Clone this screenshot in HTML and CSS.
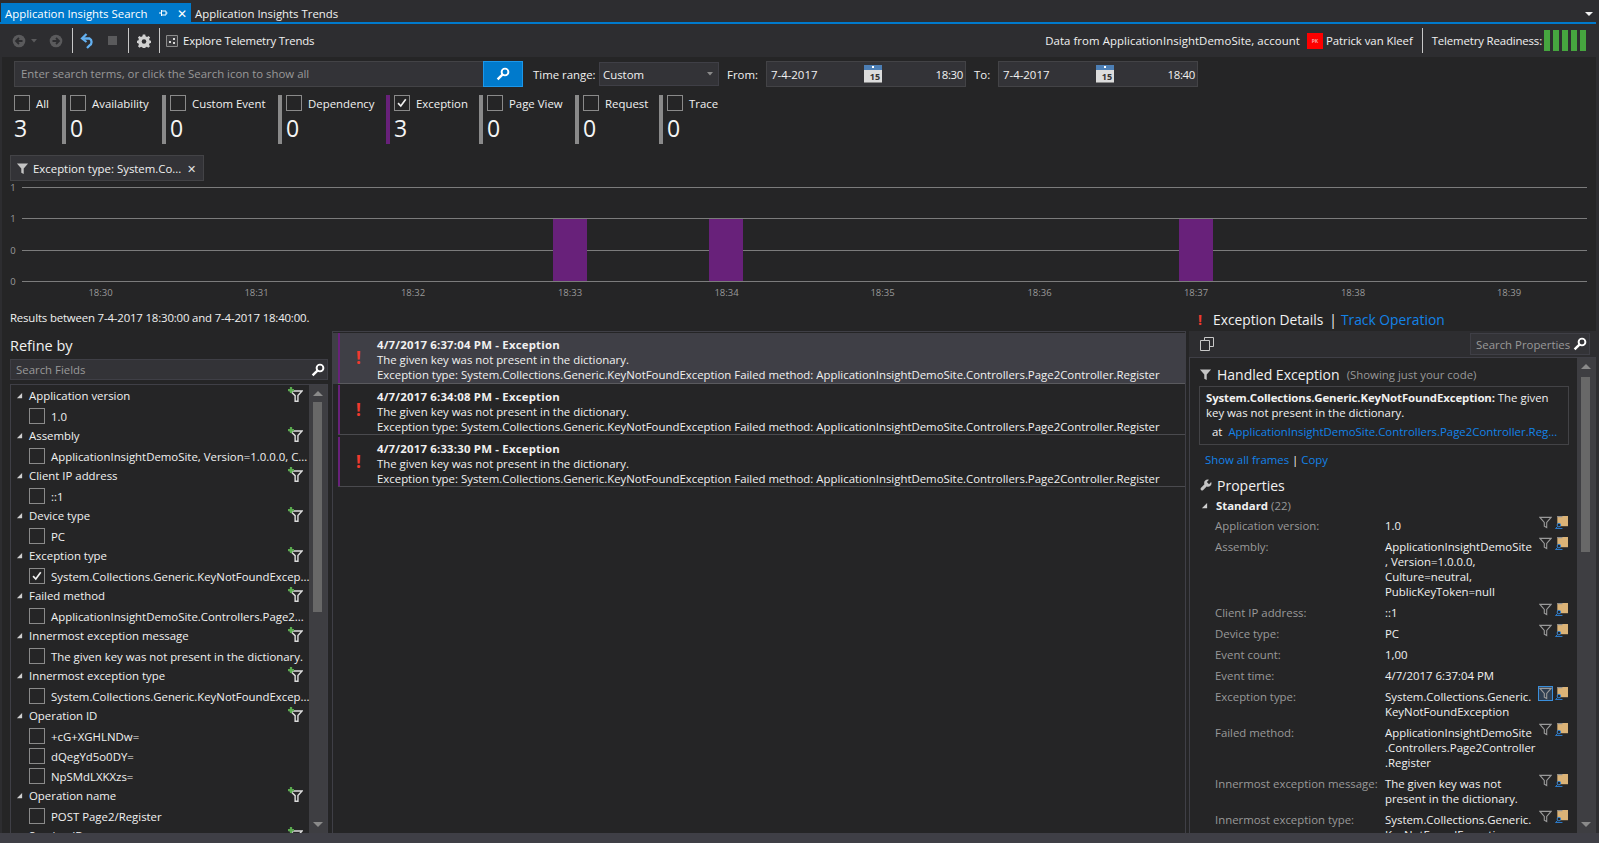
FILE: index.html
```html
<!DOCTYPE html>
<html lang="en">
<head>
<meta charset="utf-8">
<title>Application Insights Search</title>
<link rel="stylesheet" href="styles.css">
</head>
<body>
<svg class="sprite" width="0" height="0" aria-hidden="true">
  <symbol id="i-funnel-plus" viewBox="0 0 16 16">
    <path d="M2.5 4.2H15L10.6 9.2V15.2H7.6V9.2Z" fill="#252526" stroke="#dcdcdc" stroke-width="1.5"/>
    <path d="M3.2 0V6.4M0 3.2H6.4" stroke="#5cab50" stroke-width="2.4"/>
  </symbol>
  <symbol id="i-funnel" viewBox="0 0 14 14">
    <path d="M1 1.5H13L8.3 7V12.5L5.7 11V7Z" fill="none" stroke="#9a9a9a" stroke-width="1.2"/>
  </symbol>
  <symbol id="i-funnel-solid" viewBox="0 0 14 14">
    <path d="M1 1.5H13L8.3 7V13L5.7 11.5V7Z" fill="#c4c4c4"/>
  </symbol>
  <symbol id="i-doc" viewBox="0 0 14 14">
    <path d="M2.5 0H14V11H2.5Z" fill="#dbb377"/>
    <path d="M2.5 0H8V1.3H2.5Z" fill="#8f8f8f"/>
    <circle cx="4.2" cy="9.8" r="1.9" fill="#252526" stroke="#2f86dc" stroke-width="1"/>
    <path d="M2.8 11.4L.6 13.4H8" stroke="#2f86dc" stroke-width="1" fill="none"/>
  </symbol>
  <symbol id="i-search" viewBox="0 0 14 14">
    <circle cx="9" cy="5" r="3.4" fill="none" stroke="#fff" stroke-width="1.9"/>
    <path d="M6.4 7.6L1.6 12.4" stroke="#fff" stroke-width="2.4"/>
  </symbol>
  <symbol id="i-tri" viewBox="0 0 8 8">
    <path d="M7 1V7H1Z" fill="#d0d0d0"/>
  </symbol>
  <symbol id="i-check" viewBox="0 0 16 16">
    <path d="M3.5 8.2L6.6 11.4L12.3 3.8" fill="none" stroke="#f1f1f1" stroke-width="1.9"/>
  </symbol>
  <symbol id="i-cal" viewBox="0 0 20 18">
    <path d="M1 0H19V18H1Z" fill="#dcdcdc"/>
    <path d="M1 0H19V5H1Z" fill="#4d7fb5"/>
    <path d="M9 1H11V3H9Z" fill="#fff"/>
    <path d="M1 17H19V18H1Z" fill="#8a8a8a"/>
  </symbol>
</svg>

<div class="tabs">
  <div class="tab active">
    <span class="tab-name">Application Insights Search</span>
    <svg class="tab-pin" viewBox="0 0 10 10" width="10" height="10"><path d="M1 5H3.5M3.5 2V8M3.5 3H8V7H3.5M8 5H9.5" fill="none" stroke="#fff"/></svg>
    <span class="tab-close">✕</span>
  </div>
  <div class="tab"><span class="tab-name">Application Insights Trends</span></div>
  <div class="tab-menu"></div>
</div>

<div class="toolbar">
  <svg class="tool" viewBox="0 0 14 14" width="14" height="14"><circle cx="7" cy="7" r="6.3" fill="#5a5a5c"/><path d="M10.5 7H4.5M7 4L4 7L7 10" fill="none" stroke="#2d2d30" stroke-width="1.8"/></svg>
  <svg class="tool-drop" viewBox="0 0 6 4" width="6" height="4"><path d="M0 0H6L3 3.5Z" fill="#5a5a5c"/></svg>
  <svg class="tool tool-fwd" viewBox="0 0 14 14" width="14" height="14"><circle cx="7" cy="7" r="6.3" fill="#5a5a5c"/><path d="M3.5 7H9.5M7 4L10 7L7 10" fill="none" stroke="#2d2d30" stroke-width="1.8"/></svg>
  <span class="tool-sep sep-a"></span>
  <svg class="tool tool-undo" viewBox="0 0 16 16" width="16" height="16"><path d="M2.5 5.5H9.5A4 4 0 0 1 9.5 12.5L7 15" fill="none" stroke="#63b0f1" stroke-width="2.3"/><path d="M6.5 1L2 5.5L6.5 9" fill="none" stroke="#63b0f1" stroke-width="2.2"/></svg>
  <span class="tool-stop"></span>
  <span class="tool-sep sep-b"></span>
  <svg class="tool-gear" viewBox="0 0 16 16" width="14" height="14"><path d="M6.6 0.6H9.4L9.8 2.6L11.5 3.3L13.2 2.2L15 4L13.8 5.8L14.5 7.4L16 7.8V10.2L14.4 10.6L13.7 12.3L14.8 13.9L12.9 15.7L11.3 14.6L9.6 15.3L9.3 16H6.7L6.3 15.3L4.6 14.6L3 15.7L1.1 13.9L2.2 12.3L1.5 10.6L0 10.2V7.8L1.5 7.4L2.2 5.8L1 4L2.8 2.2L4.5 3.3L6.2 2.6Z" fill="#d0d0d0"/><circle cx="8" cy="8.6" r="2.6" fill="#2d2d30"/></svg>
  <span class="tool-sep sep-c"></span>
  <svg class="tool-explore" viewBox="0 0 12 12" width="12" height="12"><path d="M.5 .5H11.5V11.5H.5Z" fill="#3a3a3d" stroke="#8c8c8c"/><path d="M3 6H5V8H3ZM7 3H9V5H7ZM7 7H9V9H7Z" fill="#d8d8d8"/></svg>
  <span class="tool-label">Explore Telemetry Trends</span>
  <span class="spacer"></span>
  <span class="data-from">Data from ApplicationInsightDemoSite, account</span>
  <span class="avatar">PK</span>
  <span class="data-name">Patrick van Kleef</span>
  <span class="tool-sep sep-d"></span>
  <span class="ready-label">Telemetry Readiness:</span>
  <span class="ready-bars"><i></i><i></i><i></i><i></i><i></i></span>
</div>

<main class="main">
  <div class="query">
    <div class="searchbox">
      <span class="search-hint">Enter search terms, or click the Search icon to show all</span>
      <button class="search-btn" type="button"><svg viewBox="0 0 14 14" width="14" height="14"><use href="#i-search"/></svg></button>
    </div>
    <span class="q-label q-range">Time range:</span>
    <div class="combo"><span>Custom</span><svg viewBox="0 0 6 4" width="6" height="4"><path d="M0 0H6L3 3.5Z" fill="#8a8a8a"/></svg></div>
    <span class="q-label q-from">From:</span>
    <div class="datebox"><span class="date-val">7-4-2017</span><svg class="cal" viewBox="0 0 20 18" width="20" height="18"><use href="#i-cal"/></svg><span class="cal-day">15</span><span class="date-time">18:30</span></div>
    <span class="q-label q-to">To:</span>
    <div class="datebox"><span class="date-val">7-4-2017</span><svg class="cal" viewBox="0 0 20 18" width="20" height="18"><use href="#i-cal"/></svg><span class="cal-day">15</span><span class="date-time">18:40</span></div>
  </div>

  <div class="cats">
    <div class="cat cat-all"><div class="cat-head"><span class="box"></span><span>All</span></div><div class="cat-num">3</div></div>
    <div class="cat cat-avail"><div class="cat-head"><span class="box"></span><span>Availability</span></div><div class="cat-num">0</div></div>
    <div class="cat cat-custom"><div class="cat-head"><span class="box"></span><span>Custom Event</span></div><div class="cat-num">0</div></div>
    <div class="cat cat-dep"><div class="cat-head"><span class="box"></span><span>Dependency</span></div><div class="cat-num">0</div></div>
    <div class="cat cat-exc"><div class="cat-head"><span class="box"><svg viewBox="0 0 16 16" width="14" height="14"><use href="#i-check"/></svg></span><span>Exception</span></div><div class="cat-num">3</div></div>
    <div class="cat cat-page"><div class="cat-head"><span class="box"></span><span>Page View</span></div><div class="cat-num">0</div></div>
    <div class="cat cat-req"><div class="cat-head"><span class="box"></span><span>Request</span></div><div class="cat-num">0</div></div>
    <div class="cat cat-trace"><div class="cat-head"><span class="box"></span><span>Trace</span></div><div class="cat-num">0</div></div>
  </div>

  <div class="chip">
    <svg viewBox="0 0 14 14" width="13" height="13"><use href="#i-funnel-solid"/></svg>
    <span class="chip-text">Exception type: System.Co...</span>
    <span class="chip-x">✕</span>
  </div>

  <svg class="chart" viewBox="2 181 1594 124" width="1594" height="124">
    <g class="grid">
      <line x1="22" y1="187.5" x2="1587" y2="187.5"/>
      <line x1="22" y1="218.5" x2="1587" y2="218.5"/>
      <line x1="22" y1="250.5" x2="1587" y2="250.5"/>
      <line x1="22" y1="281.5" x2="1587" y2="281.5"/>
    </g>
    <g class="bars">
      <rect x="553" y="219" width="34" height="62"/>
      <rect x="709" y="219" width="34" height="62"/>
      <rect x="1179" y="219" width="34" height="62"/>
    </g>
    <g class="ytick">
      <text x="13" y="191">1</text><text x="13" y="222">1</text><text x="13" y="254">0</text><text x="13" y="285">0</text>
    </g>
    <g class="xtick">
      <text x="100.5" y="296">18:30</text><text x="256.5" y="296">18:31</text><text x="413" y="296">18:32</text><text x="570" y="296">18:33</text><text x="726.5" y="296">18:34</text><text x="882.5" y="296">18:35</text><text x="1039.5" y="296">18:36</text><text x="1196" y="296">18:37</text><text x="1353" y="296">18:38</text><text x="1509" y="296">18:39</text>
    </g>
  </svg>

  <div class="results-row">
    <span class="results-text">Results between 7-4-2017 18:30:00 and 7-4-2017 18:40:00.</span>
    <div class="details-title">
      <span class="bang">!</span>
      <span>Exception Details</span>
      <span class="bar">|</span>
      <a class="track">Track Operation</a>
    </div>
  </div>

  <div class="panels">
    <section class="refine">
      <h2 class="refine-title">Refine by</h2>
      <div class="fieldsearch"><span>Search Fields</span><svg viewBox="0 0 14 14" width="14" height="14"><use href="#i-search"/></svg></div>
      <div class="tree">
        <div class="tree-body">
          <div class="t-head"><svg class="tri" viewBox="0 0 8 8" width="7" height="7"><use href="#i-tri"/></svg><span>Application version</span><svg class="fplus" viewBox="0 0 16 16" width="15" height="15"><use href="#i-funnel-plus"/></svg></div>
          <div class="t-item"><span class="box"></span><span>1.0</span></div>
          <div class="t-head"><svg class="tri" viewBox="0 0 8 8" width="7" height="7"><use href="#i-tri"/></svg><span>Assembly</span><svg class="fplus" viewBox="0 0 16 16" width="15" height="15"><use href="#i-funnel-plus"/></svg></div>
          <div class="t-item"><span class="box"></span><span>ApplicationInsightDemoSite, Version=1.0.0.0, C...</span></div>
          <div class="t-head"><svg class="tri" viewBox="0 0 8 8" width="7" height="7"><use href="#i-tri"/></svg><span>Client IP address</span><svg class="fplus" viewBox="0 0 16 16" width="15" height="15"><use href="#i-funnel-plus"/></svg></div>
          <div class="t-item"><span class="box"></span><span>::1</span></div>
          <div class="t-head"><svg class="tri" viewBox="0 0 8 8" width="7" height="7"><use href="#i-tri"/></svg><span>Device type</span><svg class="fplus" viewBox="0 0 16 16" width="15" height="15"><use href="#i-funnel-plus"/></svg></div>
          <div class="t-item"><span class="box"></span><span>PC</span></div>
          <div class="t-head"><svg class="tri" viewBox="0 0 8 8" width="7" height="7"><use href="#i-tri"/></svg><span>Exception type</span><svg class="fplus" viewBox="0 0 16 16" width="15" height="15"><use href="#i-funnel-plus"/></svg></div>
          <div class="t-item"><span class="box"><svg viewBox="0 0 16 16" width="14" height="14"><use href="#i-check"/></svg></span><span>System.Collections.Generic.KeyNotFoundExcep...</span></div>
          <div class="t-head"><svg class="tri" viewBox="0 0 8 8" width="7" height="7"><use href="#i-tri"/></svg><span>Failed method</span><svg class="fplus" viewBox="0 0 16 16" width="15" height="15"><use href="#i-funnel-plus"/></svg></div>
          <div class="t-item"><span class="box"></span><span>ApplicationInsightDemoSite.Controllers.Page2...</span></div>
          <div class="t-head"><svg class="tri" viewBox="0 0 8 8" width="7" height="7"><use href="#i-tri"/></svg><span>Innermost exception message</span><svg class="fplus" viewBox="0 0 16 16" width="15" height="15"><use href="#i-funnel-plus"/></svg></div>
          <div class="t-item"><span class="box"></span><span>The given key was not present in the dictionary.</span></div>
          <div class="t-head"><svg class="tri" viewBox="0 0 8 8" width="7" height="7"><use href="#i-tri"/></svg><span>Innermost exception type</span><svg class="fplus" viewBox="0 0 16 16" width="15" height="15"><use href="#i-funnel-plus"/></svg></div>
          <div class="t-item"><span class="box"></span><span>System.Collections.Generic.KeyNotFoundExcep...</span></div>
          <div class="t-head"><svg class="tri" viewBox="0 0 8 8" width="7" height="7"><use href="#i-tri"/></svg><span>Operation ID</span><svg class="fplus" viewBox="0 0 16 16" width="15" height="15"><use href="#i-funnel-plus"/></svg></div>
          <div class="t-item"><span class="box"></span><span>+cG+XGHLNDw=</span></div>
          <div class="t-item"><span class="box"></span><span>dQegYd5o0DY=</span></div>
          <div class="t-item"><span class="box"></span><span>NpSMdLXKXzs=</span></div>
          <div class="t-head"><svg class="tri" viewBox="0 0 8 8" width="7" height="7"><use href="#i-tri"/></svg><span>Operation name</span><svg class="fplus" viewBox="0 0 16 16" width="15" height="15"><use href="#i-funnel-plus"/></svg></div>
          <div class="t-item"><span class="box"></span><span>POST Page2/Register</span></div>
          <div class="t-head"><svg class="tri" viewBox="0 0 8 8" width="7" height="7"><use href="#i-tri"/></svg><span>Session ID</span><svg class="fplus" viewBox="0 0 16 16" width="15" height="15"><use href="#i-funnel-plus"/></svg></div>
        </div>
        <div class="scroll scroll-tree"><span class="arrow-up"></span><span class="thumb"></span><span class="arrow-down"></span></div>
      </div>
    </section>

    <section class="events">
      <article class="event selected">
        <span class="ev-bang">!</span>
        <div class="ev-text">
          <div class="ev-title">4/7/2017 6:37:04 PM - Exception</div>
          <div>The given key was not present in the dictionary.</div>
          <div>Exception type: System.Collections.Generic.KeyNotFoundException Failed method: ApplicationInsightDemoSite.Controllers.Page2Controller.Register</div>
        </div>
      </article>
      <article class="event">
        <span class="ev-bang">!</span>
        <div class="ev-text">
          <div class="ev-title">4/7/2017 6:34:08 PM - Exception</div>
          <div>The given key was not present in the dictionary.</div>
          <div>Exception type: System.Collections.Generic.KeyNotFoundException Failed method: ApplicationInsightDemoSite.Controllers.Page2Controller.Register</div>
        </div>
      </article>
      <article class="event">
        <span class="ev-bang">!</span>
        <div class="ev-text">
          <div class="ev-title">4/7/2017 6:33:30 PM - Exception</div>
          <div>The given key was not present in the dictionary.</div>
          <div>Exception type: System.Collections.Generic.KeyNotFoundException Failed method: ApplicationInsightDemoSite.Controllers.Page2Controller.Register</div>
        </div>
      </article>
    </section>

    <section class="details">
      <div class="details-bar">
        <svg class="copy-ico" viewBox="0 0 14 14" width="14" height="14"><path d="M4.5 3V.5H13.5V9.5H9.5" fill="none" stroke="#c8c8c8"/><path d="M.5 3.5H9.5V13.5H.5Z" fill="none" stroke="#c8c8c8"/></svg>
        <div class="propsearch"><span>Search Properties</span><svg viewBox="0 0 14 14" width="14" height="14"><use href="#i-search"/></svg></div>
      </div>
      <div class="details-body">
        <div class="details-content">
          <div class="handled"><svg viewBox="0 0 14 14" width="13" height="13"><use href="#i-funnel-solid"/></svg><span class="handled-t">Handled Exception</span><span class="handled-n">(Showing just your code)</span></div>
          <div class="ex-box">
            <div><b>System.Collections.Generic.KeyNotFoundException:</b> The given<br>key was not present in the dictionary.</div>
            <div class="ex-at"><span>at</span><a class="link">ApplicationInsightDemoSite.Controllers.Page2Controller.Reg...</a></div>
          </div>
          <div class="ex-links"><a class="link">Show all frames</a> | <a class="link">Copy</a></div>
          <div class="prop-title"><svg viewBox="0 0 14 14" width="12" height="12"><path d="M13 3.5L10.5 6L8 3.5L10.5 1A4 4 0 0 0 5.2 6.2L1 10.5A1.8 1.8 0 0 0 3.5 13L7.8 8.8A4 4 0 0 0 13 3.5Z" fill="#c4c4c4"/></svg><span>Properties</span></div>
          <div class="std"><svg class="tri" viewBox="0 0 8 8" width="7" height="7"><use href="#i-tri"/></svg><b>Standard</b> <span class="std-n">(22)</span></div>

          <div class="prow"><span class="pk">Application version:</span><span class="pv">1.0</span><span class="pi"><svg viewBox="0 0 14 14" width="13" height="13"><use href="#i-funnel"/></svg><svg viewBox="0 0 14 14" width="13" height="13"><use href="#i-doc"/></svg></span></div>
          <div class="prow"><span class="pk">Assembly:</span><span class="pv">ApplicationInsightDemoSite<br>, Version=1.0.0.0,<br>Culture=neutral,<br>PublicKeyToken=null</span><span class="pi"><svg viewBox="0 0 14 14" width="13" height="13"><use href="#i-funnel"/></svg><svg viewBox="0 0 14 14" width="13" height="13"><use href="#i-doc"/></svg></span></div>
          <div class="prow"><span class="pk">Client IP address:</span><span class="pv">::1</span><span class="pi"><svg viewBox="0 0 14 14" width="13" height="13"><use href="#i-funnel"/></svg><svg viewBox="0 0 14 14" width="13" height="13"><use href="#i-doc"/></svg></span></div>
          <div class="prow"><span class="pk">Device type:</span><span class="pv">PC</span><span class="pi"><svg viewBox="0 0 14 14" width="13" height="13"><use href="#i-funnel"/></svg><svg viewBox="0 0 14 14" width="13" height="13"><use href="#i-doc"/></svg></span></div>
          <div class="prow"><span class="pk">Event count:</span><span class="pv">1,00</span></div>
          <div class="prow"><span class="pk">Event time:</span><span class="pv">4/7/2017 6:37:04 PM</span></div>
          <div class="prow"><span class="pk">Exception type:</span><span class="pv">System.Collections.Generic.<br>KeyNotFoundException</span><span class="pi"><svg class="hot" viewBox="0 0 14 14" width="13" height="13"><use href="#i-funnel"/></svg><svg viewBox="0 0 14 14" width="13" height="13"><use href="#i-doc"/></svg></span></div>
          <div class="prow"><span class="pk">Failed method:</span><span class="pv">ApplicationInsightDemoSite<br>.Controllers.Page2Controller<br>.Register</span><span class="pi"><svg viewBox="0 0 14 14" width="13" height="13"><use href="#i-funnel"/></svg><svg viewBox="0 0 14 14" width="13" height="13"><use href="#i-doc"/></svg></span></div>
          <div class="prow"><span class="pk">Innermost exception message:</span><span class="pv">The given key was not<br>present in the dictionary.</span><span class="pi"><svg viewBox="0 0 14 14" width="13" height="13"><use href="#i-funnel"/></svg><svg viewBox="0 0 14 14" width="13" height="13"><use href="#i-doc"/></svg></span></div>
          <div class="prow"><span class="pk">Innermost exception type:</span><span class="pv">System.Collections.Generic.<br>KeyNotFoundException</span><span class="pi"><svg viewBox="0 0 14 14" width="13" height="13"><use href="#i-funnel"/></svg><svg viewBox="0 0 14 14" width="13" height="13"><use href="#i-doc"/></svg></span></div>
        </div>
        <div class="scroll scroll-details"><span class="arrow-up"></span><span class="thumb"></span><span class="arrow-down"></span></div>
      </div>
    </section>
  </div>
</main>
<div class="footer"></div>
</body>
</html>
```
FILE: styles.css
```css
* { box-sizing: border-box; }
html, body { margin: 0; height: 100%; }
body {
  width: 1599px; height: 843px; overflow: hidden;
  background: #2d2d30; color: #f1f1f1;
  font-family: "Open Sans", "Noto Sans", sans-serif;
  font-size: 11.4px; line-height: 15px;
  display: flex; flex-direction: column;
}
.sprite { position: absolute; }
.link, .track { color: #1383e8; }

/* tabs */
.tabs { height: 24px; padding-top: 3px; display: flex; border-bottom: 2px solid #007acc; margin-right: 3px; position: relative; }
.tab { height: 19px; display: flex; align-items: center; padding-left: 4px; padding-top: 1px; }
.tab.active { width: 190px; margin-left: 1px; background: #007acc; color: #fff; }
.tab-pin { margin-left: 10px; }
.tab-close { margin-left: 9px; font-size: 12px; }
.tab-menu { position: absolute; right: 3px; top: 12px; width: 0; height: 0; border-left: 4px solid transparent; border-right: 4px solid transparent; border-top: 4px solid #f1f1f1; }

/* toolbar */
.toolbar { height: 33px; display: flex; align-items: center; padding-left: 12px; padding-right: 13px; flex: none; }
.tool-drop { margin-left: 5px; }
.tool-fwd { margin-left: 12px; }
.tool-sep { width: 1px; height: 25px; background: #c8c8c8; flex: none; }
.sep-a { margin-left: 9px; }
.tool-undo { margin-left: 7px; }
.tool-stop { width: 9px; height: 9px; background: #5a5a5c; margin-left: 12px; }
.sep-b { margin-left: 11px; }
.tool-gear { margin-left: 8px; }
.sep-c { margin-left: 8px; }
.tool-explore { margin-left: 6px; }
.tool-label { margin-left: 5px; letter-spacing: -.2px; }
.spacer { flex: 1; }
.data-from { letter-spacing: .07px; }
.avatar { width: 16px; height: 16px; margin-left: 7px; background: #f00; color: #f6a0a0; font-size: 5px; font-weight: 700; line-height: 16px; text-align: center; }
.data-name { margin-left: 3px; letter-spacing: -.05px; }
.sep-d { margin-left: 9px; }
.ready-label { margin-left: 9px; letter-spacing: -.14px; }
.ready-bars { display: flex; gap: 3px; margin-left: 2px; }
.ready-bars i { width: 6px; height: 21px; background: #46a53f; }

/* main */
.main { flex: 1; min-height: 0; margin-left: 2px; margin-right: 3px; background: #252526; display: flex; flex-direction: column; width: 1594px; }

.query { height: 26px; margin-top: 4px; padding-left: 12px; display: flex; align-items: center; flex: none; }
.searchbox { width: 509px; height: 26px; display: flex; background: #333337; border: 1px solid #434346; }
.search-hint { flex: 1; padding-left: 6px; line-height: 24px; color: #999; }
.search-btn { width: 40px; margin: -1px; border: 0; padding: 0; background: #007acc; display: flex; align-items: center; justify-content: center; border: 1px solid #1c97ea; }
.q-label { flex: none; }
.q-range { margin-left: 10px; width: 66px; }
.combo { width: 120px; height: 24px; background: #333337; border: 1px solid #3f3f46; display: flex; align-items: center; justify-content: space-between; padding: 0 5px 0 3px; }
.q-from { margin-left: 8px; width: 39px; }
.q-to { margin-left: 8px; width: 24px; }
.datebox { width: 200px; height: 26px; background: #333337; border: 1px solid #434346; display: flex; align-items: center; padding: 0 2px 0 4px; position: relative; }
.date-val { width: 92px; }
.cal { flex: none; }
.cal-day { position: absolute; left: 100px; top: 9px; width: 16px; text-align: center; color: #333; font-size: 9px; line-height: 11px; font-weight: 700; }
.date-time { margin-left: auto; letter-spacing: -.3px; }

.cats { display: flex; margin-top: 8px; padding-left: 12px; height: 49px; flex: none; }
.cat { border-left: 4px solid #8a8a8a; padding-left: 4px; }
.cat-all { width: 48px; border-left: 0; padding-left: 0; }
.cat-avail { width: 100px; }
.cat-custom { width: 116px; }
.cat-dep { width: 108px; }
.cat-exc { width: 93px; border-left-color: #68217a; }
.cat-page { width: 96px; }
.cat-req { width: 84px; }
.cat-trace { width: 90px; }
.cat-head { display: flex; gap: 6px; align-items: center; height: 16px; white-space: nowrap; }
.box { width: 16px; height: 16px; border: 1px solid #8a8a8a; display: flex; align-items: center; justify-content: center; flex: none; }
.cat-num { font-size: 23px; line-height: 32px; margin-top: 1px; color: #f5f5f5; }

.chip { width: 194px; height: 26px; margin: 11px 0 0 8px; background: #333337; border: 1px solid #434346; display: flex; align-items: center; padding-left: 5px; flex: none; }
.chip-text { margin-left: 4px; white-space: nowrap; }
.chip-x { margin-left: 6px; font-size: 11px; color: #e0e0e0; }

.chart { display: block; flex: none; }
.grid line { stroke: #7c7c7c; stroke-width: 1; }
.bars rect { fill: #68217a; }
.ytick text { fill: #999; font-size: 9.5px; text-anchor: middle; }
.xtick text { fill: #999; font-size: 9.5px; text-anchor: middle; }

.results-row { height: 26px; flex: none; display: flex; align-items: center; padding-left: 8px; }
.results-text { width: 1188px; margin-top: -1px; letter-spacing: -.16px; }
.details-title { display: flex; align-items: center; font-size: 13.8px; gap: 0; color: #f1f1f1; margin-top: 3px; }
.bang { color: #f03a2e; font-weight: 700; width: 15px; font-size: 14px; }
.bar { margin: 0 4px 0 6px; }

.panels { flex: 1; min-height: 0; display: flex; }
.refine { width: 330px; padding-left: 8px; flex: none; display: flex; flex-direction: column; min-height: 0; }
.refine-title { margin: 0; height: 28px; font-size: 14.5px; font-weight: 400; line-height: 30px; flex: none; }
.fieldsearch { width: 318px; height: 21px; background: #333337; border: 1px solid #3f3f46; display: flex; align-items: center; justify-content: space-between; padding: 0 2px 0 5px; color: #999; flex: none; }
.tree { width: 318px; flex: 1; min-height: 0; margin-top: 4px; border: 1px solid #3f3f46; border-bottom: 0; display: flex; overflow: hidden; }
.tree-body { width: 298px; flex: none; overflow: hidden; }
.t-head, .t-item { height: 20px; display: flex; align-items: center; white-space: nowrap; position: relative; }
.t-head { padding-left: 5px; }
.t-head > span { margin-left: 6px; }
.t-item { padding: 2px 0 0 18px; gap: 6px; }
.tri { flex: none; }
.fplus { position: absolute; left: 277px; top: 2px; }
.scroll { background: #3e3e42; flex: none; position: relative; }
.scroll-tree { width: 18px; }
.scroll-tree .thumb { position: absolute; left: 4px; top: 17px; width: 9px; height: 210px; background: #686868; }
.arrow-up, .arrow-down { position: absolute; left: 4px; width: 0; height: 0; border-left: 5px solid transparent; border-right: 5px solid transparent; }
.arrow-up { top: 6px; border-bottom: 5px solid #8a8a8a; }
.arrow-down { bottom: 6px; border-top: 5px solid #8a8a8a; }

.events { width: 854px; flex: none; border: 1px solid #3f3f46; border-bottom: 0; padding-top: 1px; background: #252526; }
.event { height: 52px; display: flex; padding-left: 5px; position: relative; }
.event::before { content: ""; width: 2px; background: #68217a; margin-bottom: 2px; }
.event::after { content: ""; position: absolute; left: 5px; right: 0; bottom: 2px; height: 1px; background: #4a4a4e; }
.event.selected { background: #3f3f46; height: 51px; margin-bottom: 1px; }
.event.selected::after { bottom: 0; background: #5a5a5e; }
.event.selected::before { margin-bottom: 0; }
.ev-bang { width: 37px; text-align: center; color: #f03a2e; font-size: 17px; font-weight: 700; line-height: 50px; }
.ev-text { padding-top: 4px; white-space: nowrap; }
.ev-title { font-weight: 700; letter-spacing: .2px; }

.details { flex: 1; min-width: 0; margin-left: 3px; display: flex; flex-direction: column; background: #2d2d30; min-height: 0; }
.details-bar { height: 26px; display: flex; align-items: center; justify-content: space-between; padding: 0 6px 0 11px; flex: none; }
.propsearch { width: 120px; height: 22px; background: #333337; border: 1px solid #3f3f46; display: flex; align-items: center; justify-content: space-between; padding: 0 2px 0 5px; color: #999; white-space: nowrap; }
.details-body { flex: 1; min-height: 0; display: flex; background: #252526; border: 1px solid #3f3f46; border-bottom: 0; border-right: 0; }
.details-content { flex: 1; min-width: 0; overflow: hidden; padding-left: 9px; }
.scroll-details { width: 19px; }
.scroll-details .thumb { position: absolute; left: 4px; top: 19px; width: 9px; height: 175px; background: #686868; }
.handled { height: 20px; margin-top: 6px; display: flex; align-items: center; }
.handled-t { font-size: 14px; margin-left: 5px; }
.handled-n { color: #999; margin-left: 7px; }
.ex-box { width: 370px; height: 59px; margin-top: 2px; border: 1px solid #434346; padding: 3px 6px; }
.ex-box b { letter-spacing: -.1px; }
.ex-at { margin-top: 4px; padding-left: 6px; display: flex; gap: 6px; white-space: nowrap; }
.ex-links { margin-top: 7px; padding-left: 6px; }
.prop-title { margin-top: 8px; height: 20px; display: flex; align-items: center; gap: 5px; font-size: 14px; padding-left: 1px; }
.std { display: flex; align-items: center; height: 20px; padding-left: 2px; gap: 3px; }
.std b { margin-left: 5px; }
.std-n { color: #999; }
.prow { display: flex; padding: 3px 0; position: relative; margin-left: 16px; }
.pk { width: 170px; color: #999; flex: none; white-space: nowrap; }
.pv { white-space: nowrap; }
.pi { position: absolute; left: 324px; top: 1px; display: flex; gap: 3px; }
.hot { outline: 1px solid #3a8fdc; background: #2f3e50; }

.footer { height: 10px; background: #3f3f46; flex: none; }
```
